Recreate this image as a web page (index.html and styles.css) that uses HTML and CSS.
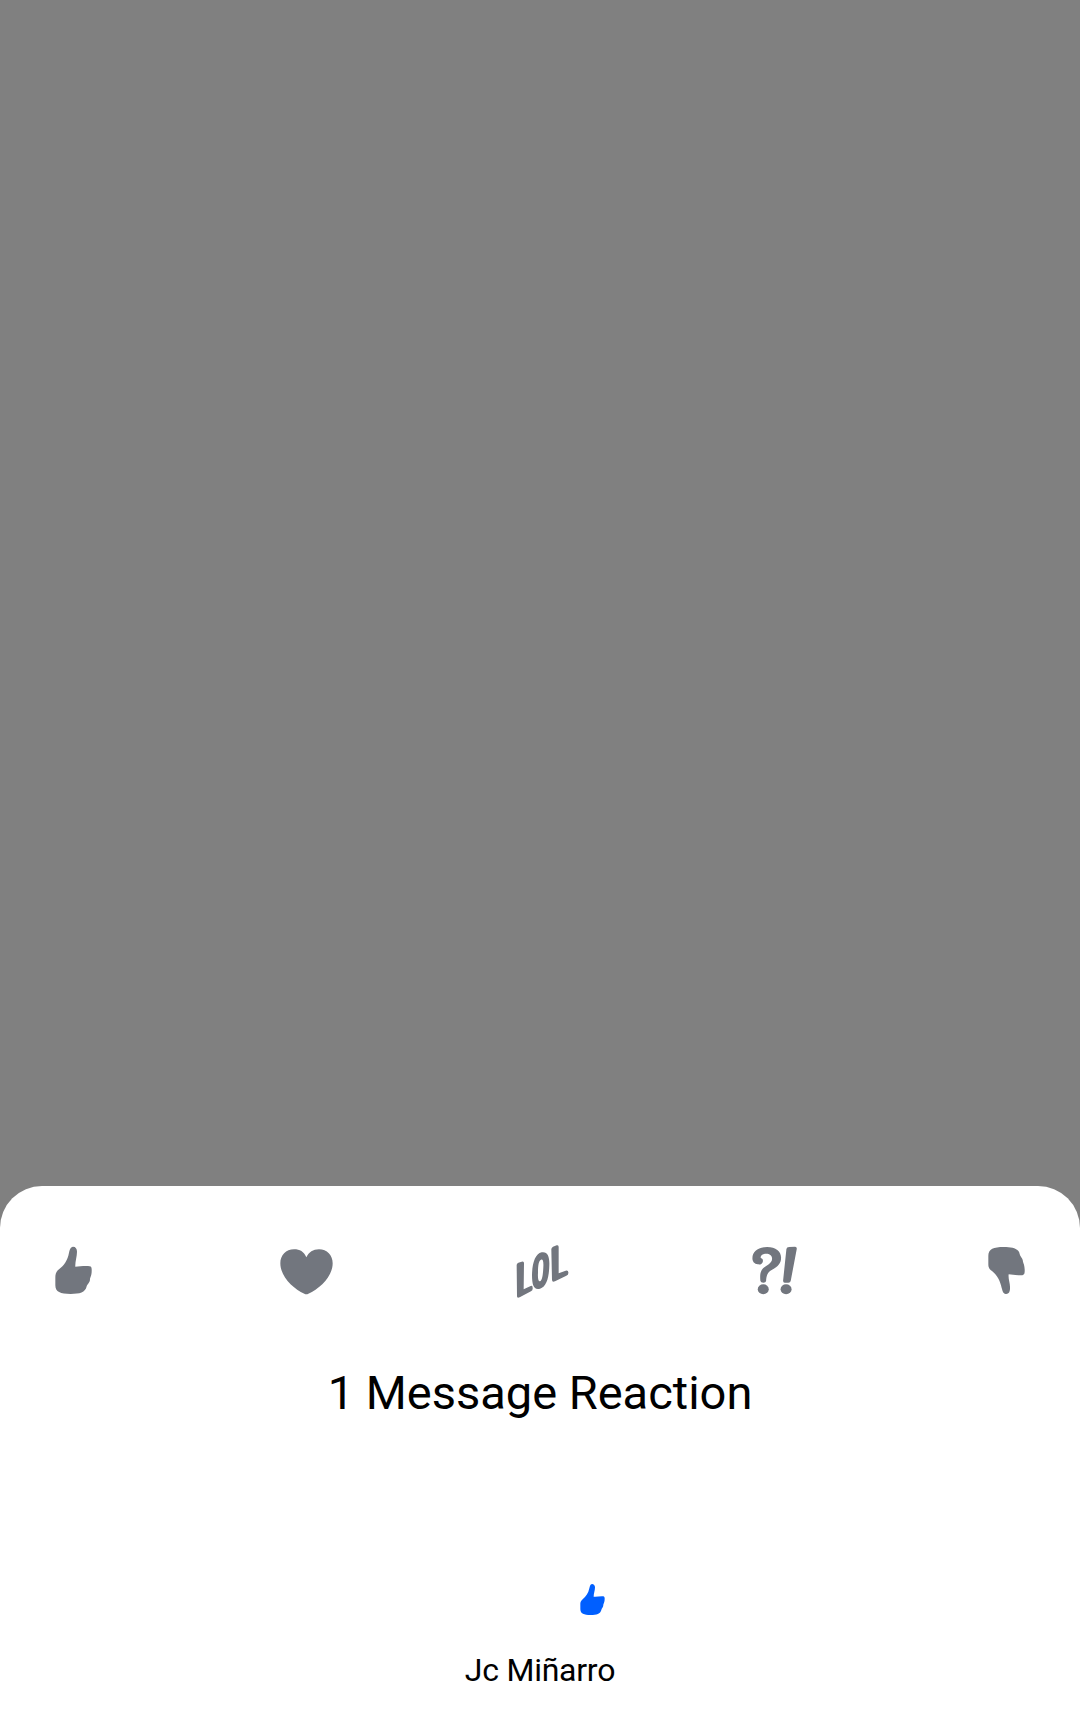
FILE: index.html
```html
<!DOCTYPE html>
<html lang="en">
<head>
<meta charset="utf-8">
<title>Message reactions</title>
<link rel="stylesheet" href="styles.css">
</head>
<body>
<main class="screen">
  <section class="sheet">
    <div class="reactions">
      <svg class="reaction" viewBox="0 0 210 210"><path d="M99 35C91 36 89 45 87 53C83 76 72 91 57 103C47 111 46 118 46 129L46 151C46 171 61 177 92 177C119 177 136 173 140 154C142 147 150 143 150 133C150 127 156 122 155 102C155 95 151 93 144 93C130 92 117 95 106 95C105 80 111 66 111 50C111 41 107 35 99 35Z"/></svg>
      <svg class="reaction" viewBox="12 -1 210 210"><path d="M109 66C101 49 90 42 72 42C48 42 31 60 31 84C31 123 69 160 103 175Q109 179 115 175C150 160 188 123 188 84C188 60 171 42 147 42C129 42 117 50 109 66Z"/></svg>
      <svg class="reaction" viewBox="3 -1 210 210"><path fill-rule="evenodd" d="M29 89Q29 84 34 82L44 79Q51 77 51 83L50 162L71 152Q77 149 77 157Q78 165 72 168L38 186Q30 190 30 183ZM104 51C122 48 128 64 127 90C126 126 119 154 99 160C80 165 75 148 75 118C76 84 84 56 104 51ZM102 73C95 75 93 91 93 113C92 130 94 139 99 138C106 136 108 116 109 96C110 79 108 71 102 73ZM133 42Q133 37 138 34L149 30Q155 28 155 35L155 114L176 106Q183 103 184 111Q185 118 178 121L144 138Q135 142 135 133Z"/></svg>
      <svg class="reaction" viewBox="3.75 0 210 210"><path d="M62 138C60 119 62 108 70 100C80 91 97 85 97 71C97 61 89 56 80 56C69 56 61 62 63 69C70 71 71 77 68 83C65 88 60 89 54 88C44 87 38 80 38 70C38 48 57 36 82 36C108 36 124 49 124 68C124 84 115 94 97 104C83 112 80 122 79 138Q78 143 71 143Q63 143 62 138Z"/><ellipse cx="70.500" cy="163" rx="16.500" ry="15"/><path d="M140 42Q141 36 148 36L166 35Q172 35 171 42L153 137Q152 143 146 143L135 143Q130 143 130 137Z"/><ellipse cx="139" cy="163" rx="16.500" ry="15"/></svg>
      <svg class="reaction" viewBox="0 0 210 210"><path d="M92 177C84 176 83 168 80 159C76 139 67 121 51 108C42 101 40 97 40 87L40 62C40 42 56 36 86 36C114 36 131 41 134 57C136 66 144 70 144 80C145 85 150 91 149 110C149 118 145 121 137 121C124 121 112 119 101 118C99 132 106 145 105 160C105 171 101 178 92 177Z"/></svg>
    </div>
    <h1 class="title">1 Message Reaction</h1>
    <div class="user">
      <svg class="user-reaction" viewBox="0 0 150 150"><path d="M66 27C60 28 60 34 58 40C55 55 48 64 38 73C31 79 31 83 31 90L31 102C31 116 42 120 62 120C80 120 91 117 94 105C95 100 100 97 100 90C101 85 104 83 104 70C104 65 101 64 96 64C87 64 78 66 71 65C71 56 75 47 75 37C75 31 71 27 66 27Z"/></svg>
      <span class="user-name">Jc Miñarro</span>
    </div>
  </section>
</main>
</body>
</html>
```
FILE: styles.css
```css
body {
  margin: 0;
  background: #808080;
  font-family: Roboto, "Liberation Sans", sans-serif;
  color: #000;
}

.screen {
  display: flex;
  flex-direction: column;
  justify-content: flex-end;
  height: 1731px;
}

.sheet {
  box-sizing: border-box;
  height: 545px;
  padding-top: 49px;
  border-radius: 42px 42px 0 0;
  background: #fff;
}

.reactions {
  display: flex;
  justify-content: space-between;
  padding: 0 35px 0 40px;
}

.reaction {
  display: block;
  width: 70px;
  height: 70px;
  fill: #72767e;
}

.title {
  margin: 60px 0 0;
  font-size: 47px;
  font-weight: 400;
  line-height: 56px;
  text-align: center;
}

.user {
  display: flex;
  flex-direction: column;
  align-items: center;
  margin-top: 154px;
}

.user-reaction {
  width: 50px;
  height: 50px;
  margin-left: 110px;
  fill: #005fff;
}

.user-name {
  margin-top: 26px;
  font-size: 32px;
  line-height: 38px;
  letter-spacing: -0.25px;
}
```
